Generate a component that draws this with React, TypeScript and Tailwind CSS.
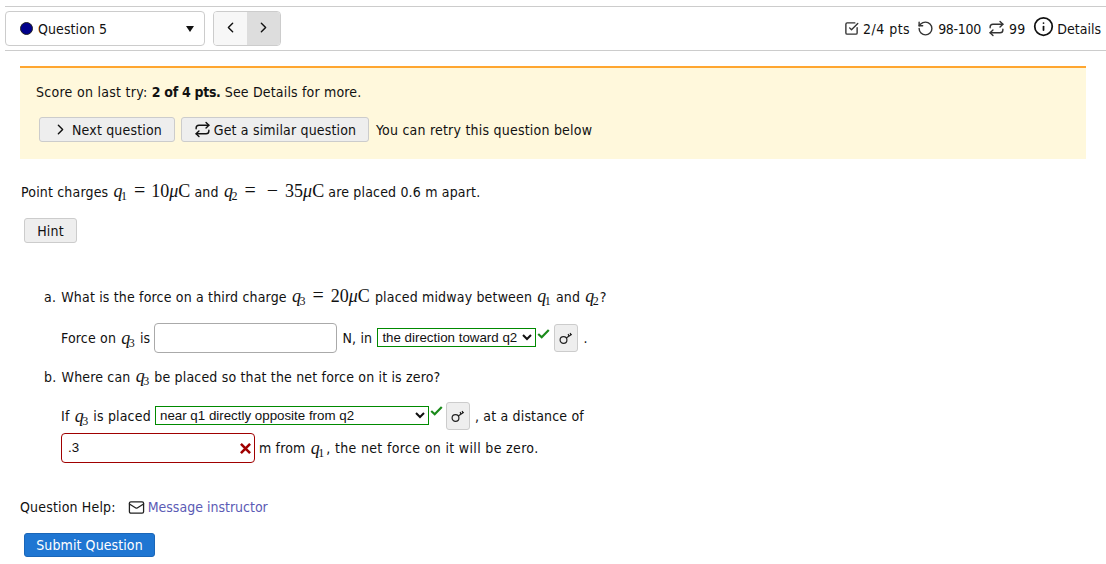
import React from "react";
import { ChevronLeft, ChevronRight, Repeat, SquareCheckBig, RotateCcw, Info, Mail } from "lucide-react";

const Q = ({ n }: { n: number }) => (
  <span className="font-['Liberation_Serif',serif] italic text-[18px] leading-none font-medium ml-[1px] mr-[1px] tracking-normal">
    q<sub className="not-italic align-baseline text-[12px] bottom-[-3px] ml-[-1.5px] leading-none">{n}</sub>
  </span>
);
const Eq = () => <span className="font-['Liberation_Serif',serif] text-[20px] leading-none mx-[6px] tracking-normal">=</span>;
const Val = ({ v }: { v: string }) => (
  <span className="font-['Liberation_Serif',serif] text-[18px] leading-none tracking-normal">
    {v}<span className="italic">μ</span>C
  </span>
);
const Key = () => (
  <svg viewBox="0 0 16 16" className="w-[16px] h-[16px]" fill="none" stroke="#222" strokeWidth="1.2">
    <circle cx="5.5" cy="10" r="3.4" />
    <path d="M8.2 8 L13.8 4.2 M10.8 6 L10.2 4 M12.8 4.9 L12.2 3" />
  </svg>
);
const KeyBtn = () => (
  <button className="w-[24px] h-[28px] flex items-center justify-center bg-[#eeeeee] border border-[#cccccc] rounded-[3px]"><Key /></button>
);
const Check = () => (
  <svg viewBox="0 0 14 11" className="w-[13px] h-[10px] self-start" fill="none" stroke="#1a8a1a" strokeWidth="2.4">
    <path d="M1.2 5.5 L5 9 L12.8 1" />
  </svg>
);

export default function App() {
  return (
    <div className="w-[1106px] h-[564px] overflow-hidden bg-white text-[#111] text-[14px] tracking-[0.17px] font-['DejaVu_Sans_Condensed','DejaVu_Sans',sans-serif]">
      <div className="h-[6px]" />
      <header className="ml-[5px] h-[45px] flex items-center border-y border-[#cccccc]">
        <div className="w-[200px] h-[35px] border border-[#cccccc] rounded-[4px] flex items-center pl-[14px] pr-[10px]">
          <span className="w-[13px] h-[13px] rounded-full bg-[#00008b] border border-[#222] mr-[5px]" />
          <span className="pt-[2px] tracking-[0.08px]">Question 5</span>
          <span className="ml-auto w-0 h-0 border-x-[4px] border-x-transparent border-t-[6px] border-t-[#111]" />
        </div>
        <div className="ml-[8px] h-[35px] w-[68px] flex border border-[#cccccc] rounded-[4px] overflow-hidden">
          <div className="flex-1 bg-[#f7f7f7] flex items-center justify-center pb-[2px]"><ChevronLeft size={17} strokeWidth={2} /></div>
          <div className="flex-1 bg-[#dddddd] flex items-center justify-center pb-[2px]"><ChevronRight size={17} strokeWidth={2} /></div>
        </div>
        <div className="ml-auto flex items-center mr-[5px]">
          <SquareCheckBig size={15} strokeWidth={2.2} className="text-[#333] mr-[4px]" />
          <span className="tracking-[0.5px] pt-[2px]">2/4 pts</span>
          <RotateCcw size={17} strokeWidth={2} className="text-[#333] ml-[7px] mr-[4px]" />
          <span className="pt-[2px] tracking-[-0.3px]">98-100</span>
          <Repeat size={17} strokeWidth={2} className="text-[#333] ml-[7px] mr-[4px]" />
          <span className="pt-[2px]">99</span>
          <Info size={21} strokeWidth={2} className="text-[#111] ml-[8px] mr-[3px] mt-[-4px]" />
          <span className="pt-[2px] tracking-normal">Details</span>
        </div>
      </header>
      <section className="mt-[15px] ml-[20px] w-[1066px] h-[93px] bg-[#fff8dc] border-t-2 border-[#ffa630] pl-[16px]">
        <p className="mt-[16px] leading-[17px]"><span className="tracking-[0.28px]">Score on last try: </span><b className="tracking-[-0.3px]">2 of 4 pts.</b> See Details for more.</p>
        <div className="mt-[16px] flex items-center">
          <button className="ml-[3px] w-[136px] h-[25px] flex items-center justify-center bg-[#eeeeee] border border-[#cccccc] rounded-[3px] pt-[1px]">
            <ChevronRight size={17} strokeWidth={2} className="mr-[3px] mb-[1px]" />Next question
          </button>
          <button className="ml-[6px] w-[188px] h-[25px] flex items-center justify-center bg-[#eeeeee] border border-[#cccccc] rounded-[3px] pt-[1px]">
            <Repeat size={17} strokeWidth={2} className="mr-[3px] mb-[1px]" />Get a similar question
          </button>
          <span className="ml-[7px] pt-[1px] tracking-[0.22px]">You can retry this question below</span>
        </div>
      </section>
      <p className="mt-[21px] ml-[21px] leading-[22px]">
        Point charges <Q n={1} /><Eq /><Val v="10" /> and <Q n={2} /><Eq /><span className="font-['Liberation_Serif',serif] text-[20px] leading-none ml-[5px] mr-[7px]">−</span><Val v="35" /> are placed 0.6 m apart.
      </p>
      <button className="block mt-[15px] ml-[24px] w-[53px] h-[25px] bg-[#eeeeee] border border-[#cccccc] rounded-[3px] pt-[1px]">Hint</button>
      <p className="mt-[42px] ml-[44px] leading-[22px]">
        <span className="mr-[1px]">a.</span> What is the force on a third charge <Q n={3} /><Eq /><span className="ml-[1px]"><Val v="20" /></span><span className="ml-[1px]"> placed midway between </span><Q n={1} /> and <Q n={2} />?
      </p>
      <div className="mt-[15px] ml-[61px] h-[30px] flex items-center whitespace-pre">
        <span>Force on </span><Q n={3} /><span> is </span>
        <input className="w-[183px] h-[30px] border border-[#aaaaaa] rounded-[4px]" />
        <span className="ml-[5px]">N, in </span>
        <select defaultValue="a" className="w-[159px] h-[19px] ml-[1px] mb-[2px] border border-[#008a00] text-[13.33px] tracking-normal font-['Liberation_Sans',sans-serif] bg-white">
          <option value="a">the direction toward q2</option>
        </select>
        <span className="self-start mt-[6px] ml-[1px] flex"><Check /></span>
        <div className="ml-[4px]"><KeyBtn /></div>
        <span className="ml-[5px]">.</span>
      </div>
      <p className="mt-[14px] ml-[44px] leading-[20px]"><span className="mr-[1px]">b.</span> Where can <Q n={3} /> be placed so that the net force on it is zero?</p>
      <div className="mt-[15px] ml-[61px] h-[28px] flex items-center whitespace-pre">
        <span>If </span><Q n={3} /><span> is placed </span>
        <select defaultValue="a" className="w-[274px] h-[19px] mb-[1px] border border-[#008a00] text-[13.33px] tracking-normal font-['Liberation_Sans',sans-serif] bg-white">
          <option value="a">near q1 directly opposite from q2</option>
        </select>
        <span className="self-start mt-[4px] ml-[1px] flex"><Check /></span>
        <div className="ml-[3px]"><KeyBtn /></div>
        <span className="ml-[5px]">, at a distance of</span>
      </div>
      <div className="mt-[3px] ml-[61px] h-[30px] flex items-center whitespace-pre">
        <div className="relative">
          <input defaultValue=".3" className="w-[194px] h-[30px] border border-[#a00000] rounded-[4px] pl-[6px] pb-[2px] text-[13.33px] tracking-normal font-['Liberation_Sans',sans-serif]" />
          <svg viewBox="0 0 12 12" className="absolute right-[4px] top-[10px] w-[11px] h-[11px]" stroke="#a00000" strokeWidth="2.8"><path d="M1 1 L11 11 M11 1 L1 11" /></svg>
        </div>
        <span className="ml-[4px]">m from </span><Q n={1} /><span className="ml-[1px] tracking-[0.34px]">, the net force on it will be zero.</span>
      </div>
      <div className="mt-[34px] ml-[20px] h-[20px] flex items-center">
        <span>Question Help:</span>
        <Mail size={17} strokeWidth={1.8} className="ml-[12px] mr-[3px] text-[#222]" />
        <span className="text-[#5b5bb5] tracking-normal">Message instructor</span>
      </div>
      <button className="block mt-[16px] ml-[24px] w-[131px] h-[24px] pt-[1px] bg-[#1f76d2] text-white border border-[#1a66b8] rounded-[3px] tracking-[0.1px]">Submit Question</button>
    </div>
  );
}
